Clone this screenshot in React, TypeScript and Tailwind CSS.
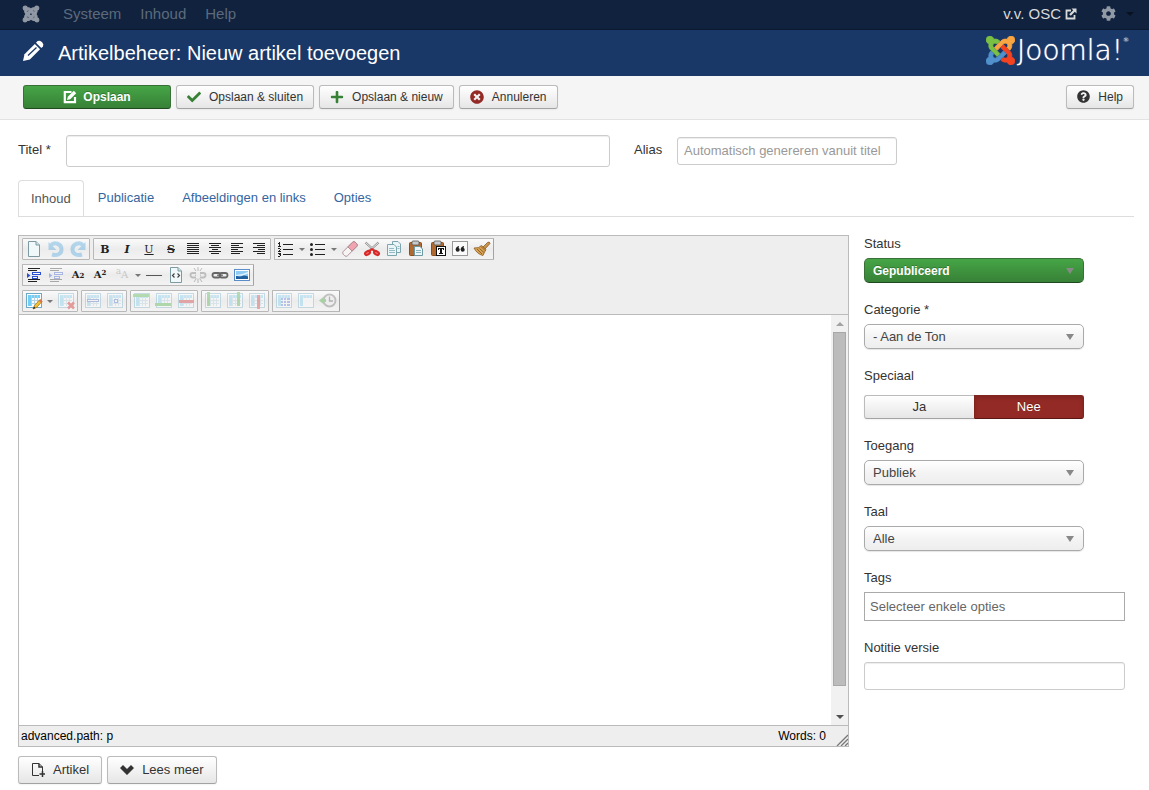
import React from "react";
import {
  FaCheck,
  FaCog,
  FaJoomla,
  FaPlus,
  FaQuestionCircle,
  FaTimesCircle,
} from "react-icons/fa";

const crisp = { shapeRendering: "crispEdges" as const };

function Icon({ children, off }: { children: React.ReactNode; off?: boolean }) {
  return (
    <svg viewBox="0 0 20 20" className={off ? "size-5 opacity-35" : "size-5"} aria-hidden="true">
      {children}
    </svg>
  );
}

function Lines({ rows, fill = "#222" }: { rows: number[][]; fill?: string }) {
  return (
    <g {...crisp} fill={fill}>
      {rows.map(([x, y, w]) => (
        <rect key={`${x}-${y}`} x={x} y={y} width={w} height="1" />
      ))}
    </g>
  );
}

function Align({ widths, side }: { widths: number[]; side: "left" | "center" | "right" }) {
  const rows = widths.map((w, i) => {
    const x = side === "left" ? 4 : side === "right" ? 16 - w : 4 + (12 - w) / 2;
    return [x, 4 + i * 2, w];
  });
  return (
    <Icon>
      <Lines rows={rows} />
    </Icon>
  );
}

function Page() {
  return (
    <>
      <path d="M4.500 2.500H12L15.500 6V17.500H4.500Z" fill="#f1f8fa" stroke="#7d9aa3" />
      <path d="M12 2.500V6H15.500" fill="#cfe2e8" stroke="#7d9aa3" />
    </>
  );
}

function Curl({ flip }: { flip?: boolean }) {
  return (
    <g transform={flip ? "translate(20 0) scale(-1 1)" : undefined}>
      <path d="M5 6.500C8 2.500 15.500 4.500 15.500 10.500C15.500 15 11 17 6 15.500" fill="none" stroke="#3d9fe0" strokeWidth="4" />
      <path d="M2.500 3V11H10.500Z" fill="#3d9fe0" />
    </g>
  );
}

function Grid({ head = true }: { head?: boolean }) {
  return (
    <g {...crisp}>
      <rect x="2" y="2" width="16" height="15" fill="#6fa9c6" />
      <rect x="3" y="3" width="14" height="13" fill="#fff" />
      {head && <path d="M4 4H16V7H7V15H4Z" fill="#74cdf5" />}
      <path d="M7 9h9v1H7zM7 12h9v1H7zM7 4h1v11H7zM10 4h1v11h-1zM13 4h1v11h-1z" fill="#b2d2e3" />
    </g>
  );
}

function Clipboard() {
  return (
    <>
      <rect x="3.500" y="3.500" width="12" height="13" rx="1" fill="#b06a30" stroke="#8a4f1e" />
      <rect x="6" y="2" width="7" height="4" rx="1" fill="#c9c9c9" stroke="#555" strokeWidth=".8" />
    </>
  );
}

function Indent({ color }: { color: string }) {
  return (
    <>
      <Lines rows={[[4, 3, 12], [4, 5, 9], [4, 14, 12], [4, 16, 9]]} />
      <g {...crisp}>
        <path d="M8 7h9v3H8zM8 11h6v3H8z" fill={color} />
        <path d="M9 8h7v1H9zM9 12h4v1H9z" fill="#fff" />
      </g>
      <path d="M3 8L6.500 10.500L3 13Z" fill={color} />
    </>
  );
}

function Chain() {
  return (
    <g fill="none" stroke="#666" strokeWidth="1.800">
      <rect x="2.500" y="8" width="8" height="4.500" rx="2.200" />
      <rect x="9.500" y="8" width="8" height="4.500" rx="2.200" />
      <path d="M7 10.200H13" strokeWidth="1.200" />
    </g>
  );
}

function Glyph({ text, className }: { text: React.ReactNode; className: string }) {
  return <span className={`font-['DejaVu_Serif',serif] text-[#222] ${className}`}>{text}</span>;
}

type Tool = { label: string; icon: React.ReactNode; split?: boolean; off?: boolean };

const rows: Tool[][][] = [
  [
    [
      { label: "Nieuw document", icon: <Icon><Page /></Icon> },
      { label: "Ongedaan maken", icon: <Icon off><Curl /></Icon> },
      { label: "Opnieuw", icon: <Icon off><Curl flip /></Icon> },
    ],
    [
      { label: "Vet", icon: <Glyph text="B" className="text-[11px] font-bold" /> },
      { label: "Cursief", icon: <Glyph text="I" className="text-[11px] font-bold italic" /> },
      { label: "Onderstrepen", icon: <Glyph text="U" className="text-[11px] underline" /> },
      { label: "Doorhalen", icon: <Glyph text="S" className="text-[11px] font-bold line-through" /> },
      { label: "Uitvullen", icon: <Align side="left" widths={[12, 12, 12, 12, 12, 12]} /> },
      { label: "Centreren", icon: <Align side="center" widths={[12, 8, 12, 6, 12, 8]} /> },
      { label: "Links uitlijnen", icon: <Align side="left" widths={[12, 8, 12, 7, 12, 9]} /> },
      { label: "Rechts uitlijnen", icon: <Align side="right" widths={[12, 8, 12, 7, 12, 8]} /> },
    ],
    [
      {
        label: "Genummerde lijst",
        split: true,
        icon: (
          <Icon>
            <Lines rows={[[7, 5, 10], [7, 10, 10], [7, 15, 10]]} />
            <g {...crisp} fill="#222">
              <path d="M3 3h1v4H3zM2 4h1v1H2zM2 7h3v1H2zM2 9h2v1H2zM4 10h1v1H4zM3 11h1v1H3zM2 12h3v1H2zM2 14h3v1H2zM3 15h2v1H3zM4 16h1v1H4zM2 17h2v1H2z" />
            </g>
          </Icon>
        ),
      },
      {
        label: "Opsommingslijst",
        split: true,
        icon: (
          <Icon>
            <Lines rows={[[7, 5, 10], [7, 10, 10], [7, 15, 10]]} />
            <g fill="#222">
              <circle cx="3.500" cy="5.500" r="1.500" />
              <circle cx="3.500" cy="10.500" r="1.500" />
              <circle cx="3.500" cy="15.500" r="1.500" />
            </g>
          </Icon>
        ),
      },
      {
        label: "Opmaak verwijderen",
        icon: (
          <Icon>
            <g transform="rotate(-45 10 10)" stroke="#a3838b" strokeWidth=".8">
              <rect x="1.500" y="7" width="17" height="6" rx="2" fill="#f8f4f4" />
              <path d="M10 7H16.500Q18.500 7 18.500 9V11Q18.500 13 16.500 13H10Z" fill="#f2a3b0" />
            </g>
          </Icon>
        ),
      },
      {
        label: "Knippen",
        icon: (
          <Icon>
            <path d="M3.500 3.500L14 13M16.500 3.500L6 13" stroke="#888" strokeWidth="2.200" />
            <path d="M3.500 3.500L13 12M16.500 3.500L7 12" stroke="#eee" strokeWidth="1" />
            <g fill="#f08080" stroke="#d82828" strokeWidth="2.200">
              <ellipse cx="5.500" cy="14" rx="2.600" ry="1.600" transform="rotate(-30 5.500 14)" />
              <ellipse cx="14.500" cy="14" rx="2.600" ry="1.600" transform="rotate(30 14.500 14)" />
            </g>
            <path d="M7 12.500L10 10L13 12.500" fill="none" stroke="#d82828" strokeWidth="2" />
          </Icon>
        ),
      },
      {
        label: "Kopiëren",
        icon: (
          <Icon>
            <g fill="#eaf5f7" stroke="#7da5ae">
              <path d="M8.500 2.500H14L16.500 5V13.500H8.500Z" />
              <path d="M3.500 5.500H10L12.500 8V16.500H3.500Z" />
            </g>
            <path d="M5 9.500h5M5 11.500h6M5 13.500h6M13.500 7.500h2M13.500 9.500h2" stroke="#8bb5bd" strokeWidth=".9" />
          </Icon>
        ),
      },
      {
        label: "Plakken",
        icon: (
          <Icon>
            <Clipboard />
            <path d="M8.500 7.500H14L16.500 10V16.500H8.500Z" fill="#edf7f9" stroke="#6d98a2" />
            <path d="M10 11.500h5M10 13.500h5" stroke="#8bb5bd" />
          </Icon>
        ),
      },
      {
        label: "Plakken als tekst",
        icon: (
          <Icon>
            <Clipboard />
            <g {...crisp}>
              <rect x="8" y="7" width="10" height="10" fill="#111" />
              <rect x="9" y="8" width="8" height="8" fill="#fff" />
              <path d="M10 9h6v2h-1v-1h-1v4h1v1h-4v-1h1v-4h-1v1h-1z" fill="#111" />
            </g>
          </Icon>
        ),
      },
      {
        label: "Citaat",
        icon: (
          <Icon>
            <rect x="2.500" y="2.500" width="15" height="14" fill="#fafafa" stroke="#999" />
            <g fill="#222">
              <circle cx="7.700" cy="10.700" r="2" />
              <circle cx="12.700" cy="10.700" r="2" />
              <path d="M5.700 10.700Q5.700 7.500 9 7V8.200Q7.500 8.800 7.700 10.700ZM10.700 10.700Q10.700 7.500 14 7V8.200Q12.500 8.800 12.700 10.700Z" />
            </g>
          </Icon>
        ),
      },
      {
        label: "Code opschonen",
        icon: (
          <Icon>
            <path d="M11 8L15.500 3.500Q17.500 2 18 4.500L13 10Z" fill="#c9954f" stroke="#7b4c16" strokeWidth=".7" />
            <path d="M2 9Q7 9.500 9.500 6.500L14 10.500Q12 14 11 16.500Q5 15 2 9Z" fill="#d9a456" stroke="#8a5a1e" strokeWidth=".8" />
            <path d="M5 10L10 15M7.500 9.500L12 13.500M9 7.500L13 11.500" stroke="#80501a" strokeWidth=".8" />
          </Icon>
        ),
      },
    ],
  ],
  [
    [
      { label: "Inspringen", icon: <Icon><Indent color="#2a4fd0" /></Icon> },
      { label: "Uitspringen", icon: <Icon off><Indent color="#2a4fd0" /></Icon> },
      { label: "Subscript", icon: <Glyph text={<>A<span className="text-[7px]">2</span></>} className="text-[10px] font-bold" /> },
      { label: "Superscript", icon: <Glyph text={<>A<sup className="text-[7px]">2</sup></>} className="text-[10px] font-bold" /> },
      {
        label: "Stijl",
        split: true,
        icon: <Glyph text={<><sup className="text-[9px]">a</sup>A</>} className="text-[10px] opacity-20" />,
      },
      { label: "Horizontale lijn", icon: <Icon><Lines rows={[[2, 10, 16]]} fill="#555" /></Icon> },
      {
        label: "Broncode",
        icon: (
          <Icon>
            <Page />
            <path d="M8.500 8.500L6.500 10.500L8.500 12.500M11.500 8.500L13.500 10.500L11.500 12.500" fill="none" stroke="#444" strokeWidth="1.200" />
          </Icon>
        ),
      },
      {
        label: "Link verwijderen",
        icon: (
          <Icon off>
            <Chain />
            <path d="M8 7h4v6h-4z" fill="#eee" />
            <path d="M10 2V6M6 3L8 6M14 3L12 6M10 14V18M6 17L8 14M14 17L12 14" stroke="#555" />
          </Icon>
        ),
      },
      { label: "Link invoegen", icon: <Icon><Chain /></Icon> },
      {
        label: "Afbeelding",
        icon: (
          <Icon>
            <rect x="2.500" y="4.500" width="15" height="11" fill="#fff" stroke="#5b8ec9" />
            <rect x="4" y="6" width="12" height="8" fill="#8fccf5" />
            <path d="M4 10.500Q8 12.500 11 10.500Q13 10 16 11.500V14H4Z" fill="#1e5fa0" />
            <path d="M4 10Q10 10 16 7V8.500Q11 11 4 11Z" fill="#e6f5ff" />
          </Icon>
        ),
      },
    ],
  ],
  [
    [
      {
        label: "Tabel",
        split: true,
        icon: (
          <Icon>
            <Grid />
            <path d="M9 18L10.500 14.500L16 8.500L18.200 10.500L12.500 16.500Z" fill="#f2c230" stroke="#9b6a10" strokeWidth=".7" />
            <path d="M16 8.500L18.200 10.500L17 11.700L14.800 9.700Z" fill="#e56a54" />
            <path d="M9 18L10 15.500L11.500 17Z" fill="#222" />
          </Icon>
        ),
      },
      { label: "Tabel verwijderen", icon: <Icon off><Grid /><path d="M12 11.500L18 17.500M18 11.500L12 17.500" stroke="#d00000" strokeWidth="2.500" /></Icon> },
    ],
    [
      { label: "Rij-eigenschappen", icon: <Icon off><Grid /><path {...crisp} d="M4 8h12v3H4z" fill="#3c63c8" /><path {...crisp} d="M5 9h10v1H5z" fill="#fff" /></Icon> },
      { label: "Cel-eigenschappen", icon: <Icon off><Grid /><path {...crisp} d="M9 8h4v4H9z" fill="#3c63c8" /><path {...crisp} d="M10 9h2v2h-2z" fill="#fff" /></Icon> },
    ],
    [
      { label: "Rij erboven", icon: <Icon off><Grid /><path {...crisp} d="M1 3h16v3H1z" fill="#3cab32" /></Icon> },
      { label: "Rij eronder", icon: <Icon off><Grid /><path {...crisp} d="M1 12h16v3H1z" fill="#3cab32" /></Icon> },
      { label: "Rij verwijderen", icon: <Icon off><Grid /><path {...crisp} d="M3 9h15v3H3z" fill="#cf2020" /></Icon> },
    ],
    [
      { label: "Kolom ervoor", icon: <Icon off><Grid /><path {...crisp} d="M4 1h3v14H4z" fill="#3cab32" /></Icon> },
      { label: "Kolom erna", icon: <Icon off><Grid /><path {...crisp} d="M12 1h3v14h-3z" fill="#3cab32" /></Icon> },
      { label: "Kolom verwijderen", icon: <Icon off><Grid /><path {...crisp} d="M10 4h3v14h-3z" fill="#cf2020" /></Icon> },
    ],
    [
      { label: "Cellen splitsen", icon: <Icon off><Grid /><path {...crisp} d="M7 7h9v8H7z" fill="#4c6fe0" /><path {...crisp} d="M7 9h9v1H7zM7 12h9v1H7zM9 7h1v8h-1zM12 7h1v8h-1z" fill="#fff" /></Icon> },
      { label: "Cellen samenvoegen", icon: <Icon off><Grid /><path {...crisp} d="M7 7h9v8H7z" fill="#fff" /></Icon> },
      {
        label: "Concept herstellen",
        icon: (
          <Icon off>
            <circle cx="11.500" cy="9.500" r="6" fill="#eee" stroke="#666" strokeWidth="1.800" />
            <path d="M11.500 5.500V10H15" fill="none" stroke="#444" strokeWidth="1.300" />
            <path d="M1 9.500L6 5.500V8H8V11H6V13.500Z" fill="#2f9a24" />
          </Icon>
        ),
      },
    ],
  ],
];

const caret = "h-0 w-0 border-x-[3px] border-t-[3px] border-x-transparent";

function EditorToolbar() {
  return (
    <div className="flex flex-col gap-1 border-b border-[#bbb] bg-[#eee] px-[3px] pt-0.5 pb-0.5">
      {rows.map((groups, r) => (
        <div key={r} className="flex gap-[3px]">
          {groups.map((group, g) => (
            <div
              key={g}
              className="flex h-[22px] rounded-[1px] border border-[#b8b8b8] bg-linear-to-b from-[#fafafa] via-[#ececec] to-[#f3f3f3] last:border-r-[#8ea6cc]"
            >
              {group.map((tool) => (
                <div key={tool.label} className="flex">
                  <button aria-label={tool.label} className="flex h-5 w-[22px] items-center justify-center overflow-hidden leading-none">
                    {tool.icon}
                  </button>
                  {tool.split && (
                    <button aria-label={`${tool.label} opties`} className="flex h-5 w-2.5 items-center justify-center">
                      <span className={`${caret} border-t-[#777]`} />
                    </button>
                  )}
                </div>
              ))}
            </div>
          ))}
        </div>
      ))}
    </div>
  );
}

const paleButton =
  "flex items-center justify-center rounded-[3px] border border-[#bbb] border-b-[#a2a2a2] bg-linear-to-b from-white to-[#e6e6e6] text-[#333] shadow-[0_1px_2px_rgba(0,0,0,.05)]";

function ActionButton({ icon, children }: { icon: React.ReactNode; children: React.ReactNode }) {
  return (
    <button className={`${paleButton} h-6 gap-2 px-2.5 text-xs`}>
      {icon}
      {children}
    </button>
  );
}

function Edit({ className }: { className: string }) {
  return (
    <svg viewBox="0 0 14 14" className={className} aria-hidden="true">
      <path d="M8.500 2H1.800V12.200H12V7" fill="none" stroke="currentColor" strokeWidth="2.200" />
      <path d="M4 10L4.800 6.800L10.800 .8L13.200 3.200L7.200 9.200Z" fill="currentColor" />
    </svg>
  );
}

function Field({ id, label, options, strong }: { id: string; label: string; options: string[]; strong?: boolean }) {
  return (
    <div>
      <label htmlFor={id} className="block h-[23px] leading-[18px]">{label}</label>
      <div className="relative w-[220px]">
        <select
          id={id}
          className={
            strong
              ? "block h-[25px] w-full appearance-none rounded-[5px] border border-[#387038] border-b-[#1f4a1f] bg-linear-to-b from-[#46a546] to-[#378137] px-2 text-xs font-bold text-white [text-shadow:0_-1px_0_rgba(0,0,0,.25)]"
              : "block h-[25px] w-full appearance-none rounded-[5px] border border-[#aaa] bg-linear-to-b from-white via-[#f4f4f4] to-[#eee] px-2 text-[#444] shadow-[0_1px_1px_rgba(0,0,0,.1)]"
          }
        >
          {options.map((o) => (
            <option key={o}>{o}</option>
          ))}
        </select>
        <span className="pointer-events-none absolute top-2.5 right-2.5 h-0 w-0 border-x-4 border-t-[6px] border-x-transparent border-t-[#888]" />
      </div>
    </div>
  );
}

const box = "rounded-[3px] border border-[#ccc] bg-white shadow-[inset_0_1px_1px_rgba(0,0,0,.075)]";

export default function App() {
  return (
    <div className="min-h-screen bg-white font-['Liberation_Sans',Arial,sans-serif] text-[13px] leading-[18px] text-[#333]">
      <nav className="flex h-[30px] items-center border-b border-[#0b1a30] bg-[#10223e] pr-[15px] pb-0.5 pl-[22px] text-[15px] text-[#5d6a7b]">
        <a href="#home" aria-label="Joomla" className="mr-[23px] text-[#9199a5]">
          <FaJoomla size={18} stroke="currentColor" strokeWidth={30} />
        </a>
        <div className="flex gap-[19px]">
          <a href="#systeem">Systeem</a>
          <a href="#inhoud">Inhoud</a>
          <a href="#help">Help</a>
        </div>
        <a href="#site" className="ml-auto flex items-center gap-1 text-[#d9d9d9]">
          v.v. OSC
          <svg viewBox="0 0 12 12" className="size-3" aria-hidden="true">
            <path d="M6 2.500H1.500V10.500H9.500V7" fill="none" stroke="currentColor" strokeWidth="1.800" />
            <path d="M6.500 .5H11.500V5.500L9.800 3.800L5.800 7.800L4.200 6.200L8.200 2.200Z" fill="currentColor" />
          </svg>
        </a>
        <button aria-label="Instellingen" className="ml-6 flex items-center gap-2.5">
          <FaCog size={15} className="text-[#9199a5]" />
          <span className="h-0 w-0 border-x-4 border-t-4 border-x-transparent border-t-[#08111f]" />
        </button>
      </nav>

      <header className="flex h-[46px] items-center bg-[#1a3867] pr-5 pl-[22px] text-white">
        <svg viewBox="0 0 22 22" className="mb-1 size-[22px]" aria-hidden="true">
          <path d="M1 21L2.500 14.200L12.800 3.900L18.100 9.200L7.800 19.500Z" fill="#fff" />
          <path d="M14 2.700L15.600 1.100Q17.500 0 19.500 1.700L20.500 2.700Q22 4.500 20.900 6.400L19.300 8Z" fill="#fff" />
          <path d="M6 15.500L14.500 7.500" stroke="#1a3867" strokeWidth="1.200" />
        </svg>
        <h1 className="ml-3.5 text-xl">Artikelbeheer: Nieuw artikel toevoegen</h1>
        <div className="ml-auto flex items-center gap-0.5">
          <svg viewBox="0 32 448 448" className="mb-1.5 size-[29px]" aria-hidden="true">
            <g strokeWidth="12">
              <path fill="#7ac143" stroke="#7ac143" d="M.6 92.100C.6 58.800 27.400 32 60.400 32c30 0 54.500 21.900 59.200 50.200 32.600-7.600 67.100.6 96.500 30l-44.300 44.300c-20.500-20.500-42.600-16.300-55.400-3.500-14.300 14.300-14.300 37.900 0 52.200l99.500 99.500-44 44.300c-87.700-87.200-49.700-49.700-99.800-99.700-26.800-26.500-35-64.800-24.800-98.900C20.400 144.600.6 120.700.6 92.100z" />
              <path fill="#f9a541" stroke="#f9a541" d="M130.100 208.500l44.300 44.300c10-10 89.700-89.700 99.700-99.800 14.300-14.300 37.600-14.300 51.900 0 12.800 12.800 17 35-3.500 55.400l44 44.300c31.200-31.200 38.500-67.600 28.900-101.200 29.200-4.100 51.900-29.200 51.900-59.500 0-33.200-26.800-60.100-59.800-60.100-30.300 0-55.400 22.500-59.500 51.600-33.800-9.900-71.700-1.500-98.300 25.100-18.300 19.100-71.100 71.500-99.600 99.900z" />
              <path fill="#f44321" stroke="#f44321" d="M396.400 360.700c8.200-32.700-.9-68.500-26.300-93.900-11.800-12.200 5 4.700-99.500-99.700l-44.300 44.300 99.700 99.700c14.300 14.300 14.300 37.600 0 51.900-12.800 12.800-35 17-55.400-3.500l-44 44.300c27.600 30.200 68 38.800 102.700 28 5.500 27.400 29.700 48.100 58.900 48.100 33 0 59.800-26.800 59.800-60.100 0-30.200-22.500-55-51.600-59.100z" />
              <path fill="#5091cd" stroke="#5091cd" d="M312.100 307.600l-44-44.300c-87 86.400-50.400 50.400-99.700 99.800-14.300 14.300-37.600 14.300-51.900 0-13.100-13.400-16.900-35.300 3.200-55.400l-44-44.300c-30.200 30.200-38 65.200-29.500 98.300-26.700 6-46.200 29.900-46.200 58.200C0 453.200 26.800 480 59.800 480c28.600 0 52.500-19.800 58.600-46.700 32.700 8.200 68.500-.6 94.200-26 32.100-32 12.200-12.400 99.500-99.700z" />
            </g>
          </svg>
          <span className="mb-1 flex items-start font-['DejaVu_Sans',sans-serif] text-[28px] leading-8 font-extralight [text-shadow:0_0_1px_#fff]">
            Joomla!<sup className="text-[6px] leading-4">®</sup>
          </span>
        </div>
      </header>

      <div className="flex h-11 items-center gap-[5px] border-b border-[#e3e3e3] bg-[#f5f5f5] pr-[15px] pb-0.5 pl-[23px]">
        <button className="flex h-6 w-[148px] items-center justify-center gap-1.5 rounded-[3px] border border-[#387038] border-b-[#1f4a1f] bg-linear-to-b from-[#46a546] to-[#378137] text-xs font-bold text-white [text-shadow:0_-1px_0_rgba(0,0,0,.25)]">
          <Edit className="size-3.5" />
          Opslaan
        </button>
        <ActionButton icon={<FaCheck size={14} className="text-[#378137]" />}>Opslaan &amp; sluiten</ActionButton>
        <ActionButton icon={<FaPlus size={14} className="text-[#378137]" />}>Opslaan &amp; nieuw</ActionButton>
        <ActionButton icon={<FaTimesCircle size={14} className="text-[#942a25]" />}>Annuleren</ActionButton>
        <div className="ml-auto">
          <ActionButton icon={<FaQuestionCircle size={13} />}>Help</ActionButton>
        </div>
      </div>

      <main className="px-[18px] pt-[15px] pr-[15px]">
        <div className="flex items-start">
          <label htmlFor="titel" className="w-12 pt-1.5">Titel *</label>
          <input id="titel" className={`${box} h-8 w-[544px] px-1.5 text-lg`} />
          <label htmlFor="alias" className="ml-6 w-[43px] pt-1.5">Alias</label>
          <input
            id="alias"
            placeholder="Automatisch genereren vanuit titel"
            className={`${box} mt-0.5 h-7 w-[220px] px-1.5 pb-0.5 placeholder:text-[#999]`}
          />
        </div>

        <div className="mt-[13px] flex border-b border-[#ddd] text-[#3565a0]">
          <button className="-mb-px h-9 rounded-t-[4px] border border-b-0 border-[#ddd] bg-white px-3 text-[#555]">Inhoud</button>
          <button className="ml-px h-9 px-[13px]">Publicatie</button>
          <button className="ml-0.5 h-9 px-[13px]">Afbeeldingen en links</button>
          <button className="ml-0.5 h-9 px-[13px]">Opties</button>
        </div>

        <div className="mt-[18px] flex gap-[15px]">
          <section className="min-w-0 flex-1">
            <div className="border border-[#bbb]">
              <EditorToolbar />
              <div className="flex h-[410px]">
                <textarea aria-label="Artikeltekst" className="min-w-0 flex-1 resize-none overflow-hidden p-2 outline-none" />
                <div className="flex w-[17px] flex-col items-center bg-[#f1f1f1]" aria-hidden="true">
                  <div className="flex h-[17px] items-center"><span className="border-x-4 border-b-4 border-x-transparent border-b-[#a3a3a3]" /></div>
                  <div className="h-[354px] w-[13px] border border-[#a8a8a8] bg-[#bcbcbc]" />
                  <div className="mt-auto flex h-[17px] items-center"><span className="border-x-4 border-t-4 border-x-transparent border-t-[#505050]" /></div>
                </div>
              </div>
              <div className="flex h-[21px] items-center border-t border-[#bbb] bg-[#eee] pl-0.5 text-xs text-black">
                <span>advanced.path: p</span>
                <span className="ml-auto">Words: 0</span>
                <svg viewBox="0 0 12 12" className="ml-2.5 size-3 self-end" aria-hidden="true">
                  <path d="M1 12L12 1M5 12L12 5M9 12L12 9" stroke="#777" strokeWidth="1.300" />
                </svg>
              </div>
            </div>
            <div className="mt-[9px] flex gap-[5px]">
              <button className={`${paleButton} h-7 gap-2 px-3`}>
                <svg viewBox="0 0 14 14" className="size-3.5" aria-hidden="true">
                  <path d="M8 12.500H1.500V.5H8L11.500 4V8" fill="none" stroke="#333" />
                  <path d="M8 .5V4H11.500M11.500 8V14M8.500 11H14" fill="none" stroke="#333" strokeWidth="1.500" />
                </svg>
                Artikel
              </button>
              <button className={`${paleButton} h-7 gap-2 px-3`}>
                <svg viewBox="0 0 14 14" className="size-3.5" aria-hidden="true">
                  <path d="M0 5L3 2L7 6L11 2L14 5L7 12Z" fill="#333" />
                </svg>
                Lees meer
              </button>
            </div>
          </section>

          <aside className="flex w-[270px] flex-col gap-[18px]">
            <Field id="status" label="Status" options={["Gepubliceerd", "Niet gepubliceerd"]} strong />
            <Field id="categorie" label="Categorie *" options={["- Aan de Ton"]} />
            <fieldset>
              <legend className="block h-7 leading-[18px]">Speciaal</legend>
              <div className="flex w-[220px]">
                <button className={`${paleButton} h-6 flex-1 rounded-r-none border-r-0`}>Ja</button>
                <button className="h-6 flex-1 rounded-r-[3px] border border-[#802420] border-b-[#5a1613] bg-[#942a25] text-white shadow-[inset_0_2px_4px_rgba(0,0,0,.15)] [text-shadow:0_-1px_0_rgba(0,0,0,.25)]">
                  Nee
                </button>
              </div>
            </fieldset>
            <Field id="toegang" label="Toegang" options={["Publiek"]} />
            <Field id="taal" label="Taal" options={["Alle"]} />
            <div>
              <label htmlFor="tags" className="block h-[23px] leading-[18px]">Tags</label>
              <input id="tags" placeholder="Selecteer enkele opties" className="block h-[29px] w-[261px] border border-[#aaa] px-[5px] placeholder:text-[#666]" />
            </div>
            <div>
              <label htmlFor="notitie" className="block h-[23px] leading-[18px]">Notitie versie</label>
              <input id="notitie" className={`${box} block h-7 w-[261px] px-1.5`} />
            </div>
          </aside>
        </div>
      </main>
    </div>
  );
}
